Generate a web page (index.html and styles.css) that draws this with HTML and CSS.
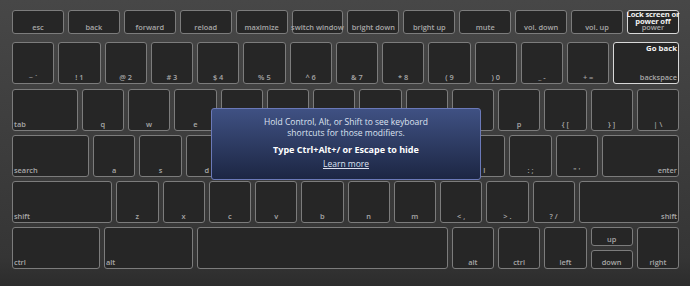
FILE: index.html
```html
<!DOCTYPE html>
<html>
  <head>
    <meta charset="utf-8" />
    <title>Keyboard overlay</title>
    <link rel="stylesheet" href="styles.css">
  </head>
  <body>
    <div class="keyboard">
      <div class="fn-row">
        <div class="key"><span>esc</span></div>
        <div class="key"><span>back</span></div>
        <div class="key"><span>forward</span></div>
        <div class="key"><span>reload</span></div>
        <div class="key"><span>maximize</span></div>
        <div class="key"><span>switch window</span></div>
        <div class="key"><span>bright down</span></div>
        <div class="key"><span>bright up</span></div>
        <div class="key"><span>mute</span></div>
        <div class="key"><span>vol. down</span></div>
        <div class="key"><span>vol. up</span></div>
        <div class="key key-on power">
          <b>Lock screen or<br>power off</b>
          <span>power</span>
        </div>
      </div>

      <div class="row">
        <div class="key"><span>~ `</span></div>
        <div class="key"><span>! 1</span></div>
        <div class="key"><span>@ 2</span></div>
        <div class="key"><span># 3</span></div>
        <div class="key"><span>$ 4</span></div>
        <div class="key"><span>% 5</span></div>
        <div class="key"><span>^ 6</span></div>
        <div class="key"><span>&amp; 7</span></div>
        <div class="key"><span>* 8</span></div>
        <div class="key"><span>( 9</span></div>
        <div class="key"><span>) 0</span></div>
        <div class="key"><span>_ -</span></div>
        <div class="key"><span>+ =</span></div>
        <div class="key key-on right w-backspace">
          <b>Go back</b>
          <span>backspace</span>
        </div>
      </div>

      <div class="row">
        <div class="key left w-tab"><span>tab</span></div>
        <div class="key"><span>q</span></div>
        <div class="key"><span>w</span></div>
        <div class="key"><span>e</span></div>
        <div class="key"><span>r</span></div>
        <div class="key"><span>t</span></div>
        <div class="key"><span>y</span></div>
        <div class="key"><span>u</span></div>
        <div class="key"><span>i</span></div>
        <div class="key"><span>o</span></div>
        <div class="key"><span>p</span></div>
        <div class="key"><span>{ [</span></div>
        <div class="key"><span>} ]</span></div>
        <div class="key"><span>| \</span></div>
      </div>

      <div class="row">
        <div class="key left w-search"><span>search</span></div>
        <div class="key"><span>a</span></div>
        <div class="key"><span>s</span></div>
        <div class="key"><span>d</span></div>
        <div class="key"><span>f</span></div>
        <div class="key"><span>g</span></div>
        <div class="key"><span>h</span></div>
        <div class="key"><span>j</span></div>
        <div class="key"><span>k</span></div>
        <div class="key"><span>l</span></div>
        <div class="key"><span>: ;</span></div>
        <div class="key"><span>" '</span></div>
        <div class="key right w-search"><span>enter</span></div>
      </div>

      <div class="row">
        <div class="key left w-shift"><span>shift</span></div>
        <div class="key"><span>z</span></div>
        <div class="key"><span>x</span></div>
        <div class="key"><span>c</span></div>
        <div class="key"><span>v</span></div>
        <div class="key"><span>b</span></div>
        <div class="key"><span>n</span></div>
        <div class="key"><span>m</span></div>
        <div class="key"><span>&lt; ,</span></div>
        <div class="key"><span>&gt; .</span></div>
        <div class="key"><span>? /</span></div>
        <div class="key right w-shift"><span>shift</span></div>
      </div>

      <div class="row">
        <div class="key left w-ctrl"><span>ctrl</span></div>
        <div class="key left w-alt"><span>alt</span></div>
        <div class="key w-space"></div>
        <div class="key"><span>alt</span></div>
        <div class="key"><span>ctrl</span></div>
        <div class="key"><span>left</span></div>
        <div class="arrows">
          <div class="key half"><span>up</span></div>
          <div class="key half"><span>down</span></div>
        </div>
        <div class="key"><span>right</span></div>
      </div>

      <div class="instructions">
        <p>Hold Control, Alt, or Shift to see keyboard<br>shortcuts for those modifiers.</p>
        <p class="hide">Type Ctrl+Alt+/ or Escape to hide</p>
        <a href="#" class="learn">Learn more</a>
      </div>
    </div>
  </body>
</html>
```

FILE: styles.css
```css
* {
  box-sizing: border-box;
}

body {
  margin: 0;
  width: 690px;
  height: 286px;
  overflow: hidden;
  font-family: 'Open Sans', 'Noto Sans', sans-serif;
  background: linear-gradient(#474747, #353535 90%, #2c2c2c);
}

.keyboard {
  --k: 42.25px;
  position: relative;
  padding: 10px 11px 0 12px;
  display: flex;
  flex-direction: column;
  gap: 4.25px;
}

.fn-row {
  display: flex;
  gap: 4px;
  height: 24px;
  margin-bottom: 4px;
}

.row {
  display: flex;
  gap: 4px;
  height: 42px;
}

.key {
  flex: 0 0 var(--k);
  min-width: 0;
  display: flex;
  flex-direction: column;
  justify-content: flex-end;
  align-items: center;
  background: #262626;
  border: 1.5px solid #7c7c7c;
  border-radius: 3px;
  padding: 0 1px 1px;
  color: #a8a8a8;
  font-size: 7.4px;
  font-weight: 600;
  line-height: 9px;
  white-space: nowrap;
}

.fn-row .key {
  flex-basis: 51.92px;
}

.left {
  align-items: flex-start;
}

.right {
  align-items: flex-end;
}

.key b {
  color: #f2f2f2;
  font-weight: 700;
  text-align: center;
  margin-bottom: auto;
}

.key-on {
  border-color: #d8d8d8;
}

.power {
  line-height: 7.8px;
}

.power b {
  padding-top: 1px;
  font-size: 7.6px;
  letter-spacing: -0.15px;
}

.power span {
  margin-top: -2px;
}

.w-backspace b {
  padding-top: 1px;
  font-size: 7.8px;
}

.w-backspace { flex-basis: 65.75px; }
.w-tab { flex-basis: 65.75px; }
.w-search { flex-basis: 77.12px; }
.w-shift { flex-basis: 100.25px; }
.w-ctrl { flex-basis: 88px; }
.w-alt { flex-basis: 89px; }
.w-space { flex-basis: 250.75px; }

.arrows {
  flex: 0 0 var(--k);
  display: flex;
  flex-direction: column;
  gap: 4px;
}

.arrows .half {
  flex: 1;
}

.instructions {
  position: absolute;
  left: 211px;
  top: 108px;
  width: 270px;
  height: 72px;
  padding-top: 7px;
  border: 1px solid #6b79b8;
  border-radius: 3px;
  background: linear-gradient(#3f5183, #1c2643);
  color: #dde2f0;
  text-align: center;
  font-size: 8.5px;
  line-height: 11px;
}

.instructions p {
  margin: 0;
}

.instructions .hide {
  margin-top: 6px;
  color: #ffffff;
  font-weight: 700;
  font-size: 9px;
}

.learn {
  display: inline-block;
  margin-top: 3px;
  color: #dde2f0;
  font-size: 8.5px;
}
```
